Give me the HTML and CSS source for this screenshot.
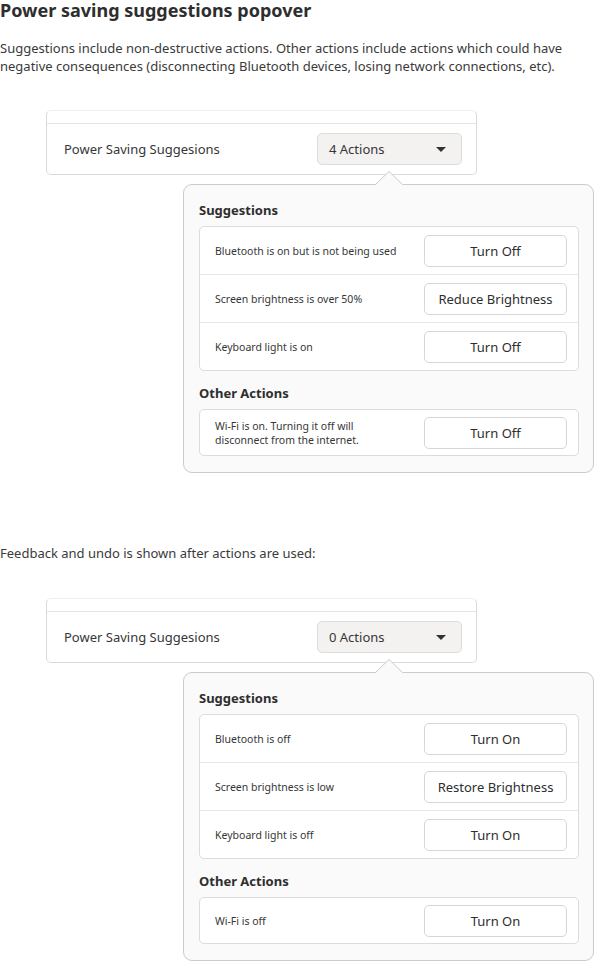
FILE: index.html
```html
<!DOCTYPE html>
<html lang="en">
<head>
<meta charset="utf-8">
<title>Power saving suggestions popover</title>
<link rel="stylesheet" href="styles.css">
</head>
<body>
<h1 class="title">Power saving suggestions popover</h1>
<p class="intro">Suggestions include non-destructive actions. Other actions include actions which could have negative consequences (disconnecting Bluetooth devices, losing network connections, etc).</p>

<section class="demo">
  <div class="card">
    <div class="card-strip"></div>
    <div class="card-row">
      <span class="card-label">Power Saving Suggesions</span>
      <div class="dropdown">
        <span>4 Actions</span>
        <svg class="caret" width="10" height="5" viewBox="0 0 10 5"><path d="M0 0H10L5 5Z"/></svg>
      </div>
    </div>
  </div>
  <div class="popover">
    <svg class="arrow" width="28" height="14" viewBox="0 0 28 14"><path class="arrow-fill" d="M0 14L14 0L28 14Z"/><path class="arrow-line" d="M0.5 13.5L14 0.5L27.5 13.5"/></svg>
    <h2 class="group-title">Suggestions</h2>
    <div class="list">
      <div class="row"><span class="row-label">Bluetooth is on but is not being used</span><button class="btn">Turn Off</button></div>
      <div class="row"><span class="row-label">Screen brightness is over 50%</span><button class="btn">Reduce Brightness</button></div>
      <div class="row"><span class="row-label">Keyboard light is on</span><button class="btn">Turn Off</button></div>
    </div>
    <h2 class="group-title">Other Actions</h2>
    <div class="list list-single">
      <div class="row"><span class="row-label">Wi-Fi is on. Turning it off will<br>disconnect from the internet.</span><button class="btn">Turn Off</button></div>
    </div>
  </div>
</section>

<p class="note">Feedback and undo is shown after actions are used:</p>

<section class="demo demo-second">
  <div class="card">
    <div class="card-strip"></div>
    <div class="card-row">
      <span class="card-label">Power Saving Suggesions</span>
      <div class="dropdown">
        <span>0 Actions</span>
        <svg class="caret" width="10" height="5" viewBox="0 0 10 5"><path d="M0 0H10L5 5Z"/></svg>
      </div>
    </div>
  </div>
  <div class="popover">
    <svg class="arrow" width="28" height="14" viewBox="0 0 28 14"><path class="arrow-fill" d="M0 14L14 0L28 14Z"/><path class="arrow-line" d="M0.5 13.5L14 0.5L27.5 13.5"/></svg>
    <h2 class="group-title">Suggestions</h2>
    <div class="list">
      <div class="row"><span class="row-label">Bluetooth is off</span><button class="btn">Turn On</button></div>
      <div class="row"><span class="row-label">Screen brightness is low</span><button class="btn">Restore Brightness</button></div>
      <div class="row"><span class="row-label">Keyboard light is off</span><button class="btn">Turn On</button></div>
    </div>
    <h2 class="group-title">Other Actions</h2>
    <div class="list list-single">
      <div class="row"><span class="row-label">Wi-Fi is off</span><button class="btn">Turn On</button></div>
    </div>
  </div>
</section>
</body>
</html>
```
FILE: styles.css
```css
* { box-sizing: border-box; }

body {
  margin: 0;
  background: #ffffff;
  color: #363636;
  font-family: "Noto Sans", "Open Sans", sans-serif;
}

.title {
  margin: 0;
  font-size: 18px;
  line-height: 20px;
  font-weight: 700;
  color: #2e2e2e;
}

.intro {
  margin: 19px 0 0;
  font-size: 13px;
  line-height: 18px;
  color: #3a3a3a;
}

.note {
  margin: 71px 0 0;
  font-size: 13px;
  line-height: 18px;
  color: #3a3a3a;
}

.demo {
  margin-top: 35px;
  padding-left: 46px;
}
.demo-second { margin-top: 36px; }

.card {
  width: 431px;
  background: #ffffff;
  border: 1px solid #dadada;
  border-top-color: #efefef;
  border-radius: 5px;
}

.card-strip {
  height: 13px;
  border-bottom: 1px solid #e4e4e4;
}

.card-row {
  height: 50px;
  display: flex;
  align-items: center;
  justify-content: space-between;
  padding: 0 14px 0 17px;
}

.card-label {
  font-size: 13px;
  color: #363636;
}

.dropdown {
  width: 145px;
  height: 32px;
  display: flex;
  align-items: center;
  justify-content: space-between;
  padding: 0 15px 0 11px;
  background: #f3f2f1;
  border: 1px solid #dcdcdc;
  border-radius: 5px;
  font-size: 13px;
  color: #363636;
}

.caret path { fill: #2e3436; }

.popover {
  position: relative;
  width: 411px;
  margin: 9px 0 0 137px;
  padding: 15px 14px 16px 15px;
  background: #fafafa;
  border: 1px solid #cbcbcb;
  border-radius: 9px;
}

.arrow {
  position: absolute;
  top: -14px;
  left: 191px;
  display: block;
}
.arrow-fill { fill: #fafafa; }
.arrow-line { fill: none; stroke: #cbcbcb; stroke-width: 1; }

.group-title {
  margin: 12px 0 6px;
  font-size: 13px;
  line-height: 20px;
  font-weight: 700;
  color: #2e2e2e;
}
.group-title:first-of-type { margin-top: 0; }

.list {
  background: #ffffff;
  border: 1px solid #dcdcdc;
  border-radius: 5px;
}

.row {
  height: 47px;
  display: flex;
  align-items: center;
  justify-content: space-between;
  padding: 0 11px 0 15px;
}
.row + .row { border-top: 1px solid #e6e6e6; height: 48px; }

.list-single .row { height: 45px; }

.row-label {
  font-size: 10.5px;
  line-height: 14px;
  color: #363636;
}

.btn {
  width: 143px;
  height: 32px;
  padding: 0;
  background: #ffffff;
  border: 1px solid #d6d6d6;
  border-radius: 5px;
  font-family: inherit;
  font-size: 13px;
  color: #2e2e2e;
}
```
